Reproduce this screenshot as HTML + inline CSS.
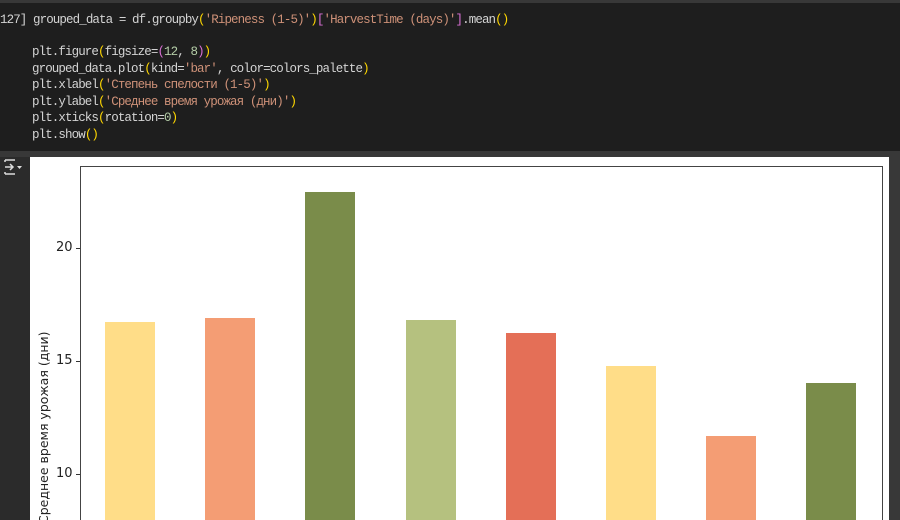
<!DOCTYPE html><html><head><style>
html,body{margin:0;width:900px;height:520px;overflow:hidden}
body{background:#383838;position:relative;font-family:"Liberation Mono",monospace}
.code{position:absolute;left:0;top:0;width:900px;height:151px;background:#1e1e1e;border-top:3px solid #383838;box-sizing:border-box}
.ln{position:absolute;left:32px;font-size:12.5px;letter-spacing:-0.9px;color:#d4d4d4;white-space:pre;font-family:"Liberation Mono",monospace}
.s{color:#ce9178}.p{color:#ffd700}.m{color:#da70d6}.n{color:#b5cea8}
.gut{position:absolute;left:0;top:157px;width:30px;height:363px;background:#2b2b2b}
.out{position:absolute;left:30px;top:157px;width:859px;height:363px;background:#fff}
.ax{position:absolute;left:80px;top:166px;width:801px;height:354px;border:1px solid #444;border-bottom:none;overflow:hidden}
.bar{position:absolute;width:50px;bottom:0}
.tk{position:absolute;font-family:"DejaVu Sans",sans-serif;font-size:13px;color:#222}
</style></head><body>
<div class="code">
<div class="ln" style="left:0;top:10px">127] grouped_data = df.groupby<span class="p">(</span><span class="s">'Ripeness (1-5)'</span><span class="p">)</span><span class="m">[</span><span class="s">'HarvestTime (days)'</span><span class="m">]</span>.mean<span class="p">()</span></div>
<div class="ln" style="top:42px">plt.figure<span class="p">(</span>figsize=<span class="m">(</span><span class="n">12</span>, <span class="n">8</span><span class="m">)</span><span class="p">)</span></div>
<div class="ln" style="top:59px">grouped_data.plot<span class="p">(</span>kind=<span class="s">'bar'</span>, color=colors_palette<span class="p">)</span></div>
<div class="ln" style="top:75px">plt.xlabel<span class="p">(</span><span class="s">'Степень спелости (1-5)'</span><span class="p">)</span></div>
<div class="ln" style="top:92px">plt.ylabel<span class="p">(</span><span class="s">'Среднее время урожая (дни)'</span><span class="p">)</span></div>
<div class="ln" style="top:108px">plt.xticks<span class="p">(</span>rotation=<span class="n">0</span><span class="p">)</span></div>
<div class="ln" style="top:125px">plt.show<span class="p">()</span></div>
</div>
<div class="gut"><svg width="24" height="20" style="position:absolute;left:2px;top:0"><path d="M3 3h10M3 10h8M8 7l3 3-3 3M3 17h10M3 3v2M3 15v2" stroke="#ddd" stroke-width="1.5" fill="none"/><path d="M15 9h5l-2.5 3z" fill="#ddd"/></svg></div>
<div class="out"></div>
<div class="ax">
<div class="bar" style="left:24px;top:155px;background:#ffdd88"></div>
<div class="bar" style="left:124px;top:151px;background:#f49d74"></div>
<div class="bar" style="left:224px;top:25px;background:#7a8c4a"></div>
<div class="bar" style="left:325px;top:153px;background:#b5c17f"></div>
<div class="bar" style="left:425px;top:166px;background:#e46f57"></div>
<div class="bar" style="left:525px;top:199px;background:#ffdd88"></div>
<div class="bar" style="left:625px;top:269px;background:#f49d74"></div>
<div class="bar" style="left:725px;top:216px;background:#7a8c4a"></div>
</div>
<div style="position:absolute;left:76px;top:248px;width:4px;height:1px;background:#333"></div>
<div style="position:absolute;left:76px;top:361px;width:4px;height:1px;background:#333"></div>
<div style="position:absolute;left:76px;top:474px;width:4px;height:1px;background:#333"></div>
<div class="tk" style="left:56px;top:240px">20</div>
<div class="tk" style="left:56px;top:353px">15</div>
<div class="tk" style="left:56px;top:466px">10</div>
<div class="tk" style="left:36px;top:524px;transform-origin:0 0;transform:rotate(-90deg);white-space:nowrap;font-size:12.5px">Среднее время урожая (дни)</div>
</body></html>
